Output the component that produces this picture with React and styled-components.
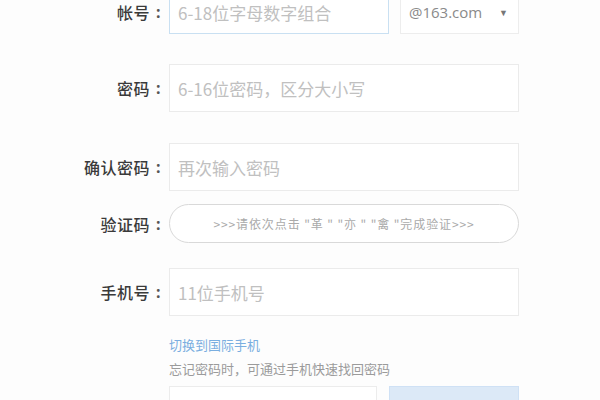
import React from "react";
import styled, { createGlobalStyle } from "styled-components";

const GlobalStyle = createGlobalStyle`
  html, body {
    margin: 0;
    padding: 0;
    background: #fdfdfd;
  }
  body {
    width: 600px;
    height: 400px;
    overflow: hidden;
    font-family: "Noto Sans CJK SC", "Noto Sans", sans-serif;
  }
`;

const Form = styled.form`
  margin-top: -10px;
  display: flex;
  flex-direction: column;
`;

const Row = styled.div`
  display: grid;
  grid-template-columns: 163px 350px;
  column-gap: 6px;
  align-items: center;
  margin-top: ${(p) => p.$gap || 0}px;
`;

const Label = styled.label`
  display: flex;
  justify-content: flex-end;
  align-items: center;
  font-size: 16px;
  color: #3a3a3a;
  font-weight: 500;
  letter-spacing: 0.5px;
`;

const Colon = styled.span`
  margin-left: 6px;
  margin-right: 2px;
  font-family: "Noto Sans", sans-serif;
  font-weight: 700;
  color: #555;
`;

const Field = styled.div`
  height: ${(p) => p.$h || 48}px;
  box-sizing: border-box;
  border: 1px solid ${(p) => (p.$focus ? "#c9e0f2" : "#ebebeb")};
  background: #fff;
  display: flex;
  align-items: center;
  padding-left: 8px;
  font-size: 17px;
  color: #c0c0c0;
`;

const AccountLine = styled.div`
  display: grid;
  grid-template-columns: 220px 119px;
  column-gap: 11px;
`;

const Select = styled.div`
  height: 44px;
  box-sizing: border-box;
  border: 1px solid #ededed;
  background: #fff;
  display: flex;
  align-items: center;
  justify-content: space-between;
  padding: 0 10px 0 8px;
  font-family: "Open Sans", "Noto Sans", sans-serif;
  font-size: 15px;
  color: #8a8a8a;
`;

const Caret = styled.span`
  font-size: 9px;
  color: #777;
`;

const Captcha = styled.div`
  height: 39px;
  box-sizing: border-box;
  border: 1px solid #d9d9d9;
  border-radius: 20px;
  background: #fff;
  display: flex;
  align-items: center;
  justify-content: center;
  font-size: 12px;
  color: #aaaaaa;
  letter-spacing: 0.9px;
`;

const Notes = styled.div`
  margin-left: 169px;
  margin-top: 20px;
  display: flex;
  flex-direction: column;
  gap: 6px;
`;

const Link = styled.a`
  font-size: 13px;
  color: #7aaee0;
  text-decoration: none;
  line-height: 18px;
`;

const Hint = styled.div`
  font-size: 13px;
  color: #9b9b9b;
  line-height: 18px;
`;

const Actions = styled.div`
  margin-left: 169px;
  margin-top: 8px;
  display: grid;
  grid-template-columns: 208px 130px;
  column-gap: 12px;
`;

const ActionBox = styled.div`
  height: 40px;
  box-sizing: border-box;
  border: 1px solid ${(p) => (p.$primary ? "#cfe1f5" : "#ececec")};
  background: ${(p) => (p.$primary ? "#dce9f7" : "#fff")};
`;

const FormLabel = ({ children }) => (
  <Label>
    {children}
    <Colon>:</Colon>
  </Label>
);

const App = () => {
  return (
    <>
      <GlobalStyle />
      <Form>
        <Row>
          <FormLabel>帐号</FormLabel>
          <AccountLine>
            <Field $focus $h={44}>6-18位字母数字组合</Field>
            <Select>
              @163.com<Caret>▼</Caret>
            </Select>
          </AccountLine>
        </Row>
        <Row $gap={30}>
          <FormLabel>密码</FormLabel>
          <Field>6-16位密码，区分大小写</Field>
        </Row>
        <Row $gap={31}>
          <FormLabel>确认密码</FormLabel>
          <Field>再次输入密码</Field>
        </Row>
        <Row $gap={13}>
          <FormLabel>验证码</FormLabel>
          <Captcha>&gt;&gt;&gt;请依次点击 "革 " "亦 " "禽 "完成验证&gt;&gt;&gt;</Captcha>
        </Row>
        <Row $gap={25}>
          <FormLabel>手机号</FormLabel>
          <Field>11位手机号</Field>
        </Row>
      </Form>
      <Notes>
        <Link href="#">切换到国际手机</Link>
        <Hint>忘记密码时，可通过手机快速找回密码</Hint>
      </Notes>
      <Actions>
        <ActionBox />
        <ActionBox $primary />
      </Actions>
    </>
  );
};

export default App;
